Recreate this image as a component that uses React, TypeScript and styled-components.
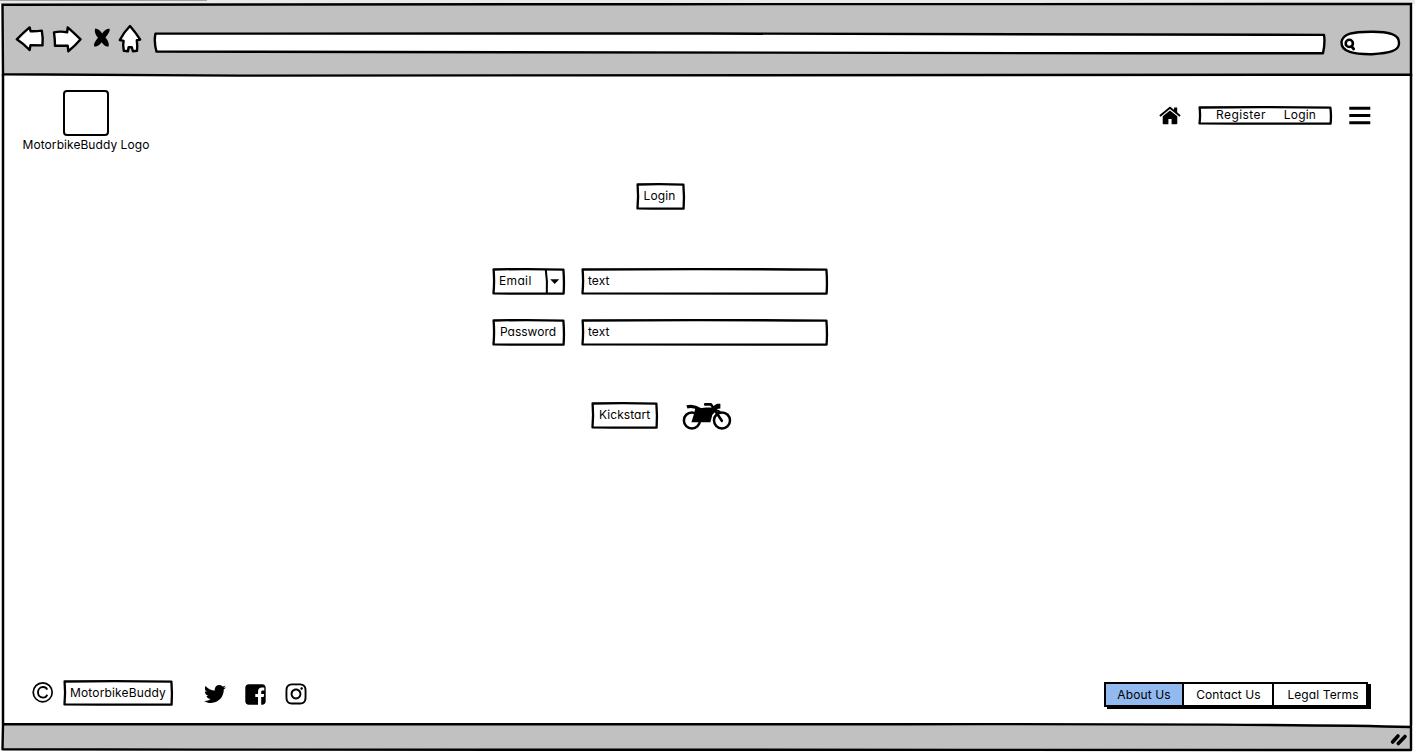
import React from "react";
import styled, { createGlobalStyle } from "styled-components";
import { FaTwitter, FaInstagram } from "react-icons/fa";

const GlobalStyle = createGlobalStyle`
  * { box-sizing: border-box; }
  body {
    margin: 0;
    background: #ffffff;
    color: #000;
    font-family: Inter, "Liberation Sans", sans-serif;
    font-size: 12px;
    font-feature-settings: "cv11";
  }
`;

const Window = styled.div`
  width: 1415px;
  height: 754px;
  overflow: hidden;
  display: flex;
  flex-direction: column;
`;

const TopEdge = styled.div`
  height: 4px;
  flex: none;
  background: #e9e9ec;
  &::before {
    content: "";
    display: block;
    width: 207px;
    height: 1px;
    background: #a0a0a0;
  }
`;

const Toolbar = styled.header`
  position: relative;
  flex: none;
  height: 71px;
  display: flex;
  padding: 20px 0 0 15px;
`;

const StatusBar = styled.footer`
  position: relative;
  flex: none;
  height: 30px;
  display: flex;
  justify-content: flex-end;
  padding: 9px 8px 0 0;
`;

const Page = styled.main`
  flex: 1;
  display: flex;
  flex-direction: column;
`;

const Outline = styled.svg`
  position: absolute;
  inset: 0;
  overflow: visible;
`;

const Drawing = styled.svg`
  position: relative;
  display: block;
  flex: none;
  overflow: visible;
`;

const SiteHeader = styled.div`
  display: flex;
  justify-content: space-between;
  height: 78px;
  padding: 15px 44px 0 22px;
`;

const Brand = styled.div`
  display: flex;
  flex-direction: column;
  align-items: center;
  width: 128px;
  gap: 1px;
`;

const LogoBox = styled.div`
  width: 46px;
  height: 46px;
  border: 2px solid #000;
  border-radius: 4px;
`;

const Nav = styled.nav`
  display: flex;
  align-items: flex-start;
  padding-top: 16px;
  gap: 17px;
`;

const Frame = styled.div<{ $w: number; $h: number; $pad?: number; $gap?: number }>`
  position: relative;
  flex: none;
  display: flex;
  align-items: center;
  width: ${(p) => p.$w}px;
  height: ${(p) => p.$h}px;
  padding-left: ${(p) => p.$pad ?? 7}px;
  gap: ${(p) => p.$gap ?? 0}px;
`;

const Text = styled.span<{ $track?: number }>`
  position: relative;
  line-height: 16px;
  white-space: nowrap;
  letter-spacing: ${(p) => p.$track ?? 0.05}px;
`;

const Raised = styled(Text)`
  padding-bottom: 2px;
`;

const Form = styled.div`
  display: flex;
  flex-direction: column;
  align-items: center;
  width: 334px;
  margin: 30px 0 0 493px;
`;

const LoginTitle = styled.div`
  margin-bottom: 58px;
`;

const Field = styled.div`
  display: flex;
  gap: 16px;
  margin-bottom: 24px;
`;

const Submit = styled.div`
  display: flex;
  align-items: flex-start;
  gap: 25px;
  margin: 32px 0 0 3px;
`;

const SiteFooter = styled.div`
  display: flex;
  justify-content: space-between;
  margin-top: auto;
  padding: 0 44px 17px 32px;
`;

const Social = styled.div`
  display: flex;
  align-items: flex-start;
`;

const IconSlot = styled.span<{ $size: number; $left?: number; $top?: number }>`
  display: flex;
  font-size: ${(p) => p.$size}px;
  margin: ${(p) => p.$top ?? 0}px 0 0 ${(p) => p.$left ?? 0}px;
`;

const OwnerTag = styled.div`
  margin: -1px 0 0 9px;
`;

const Tabs = styled.div`
  display: flex;
  align-self: flex-start;
  height: 25px;
  margin: 1px 3px 0 0;
  border: 2px solid #000;
  box-shadow: 3px 2px 0 #000;
`;

const Tab = styled.div<{ $w: number; $active?: boolean; $shift?: number }>`
  width: ${(p) => p.$w}px;
  display: flex;
  align-items: center;
  justify-content: center;
  padding-left: ${(p) => p.$shift ?? 0}px;
  white-space: nowrap;
  letter-spacing: 0.1px;
  background: ${(p) => (p.$active ? "#92b9f0" : "#fff")};
  & + & { border-left: 2px solid #000; }
`;

/* Hand-drawn rectangle: slightly bowed sides with a rounded pen. */
function Sketch({ w, h }: { w: number; h: number }) {
  const r = w - 1.4;
  const b = h - 1.4;
  return (
    <Outline width={w} height={h} aria-hidden="true">
      <path
        d={`M1.6 1.5 Q${w * 0.5} ${0.7} ${r - 0.2} 1.6 Q${r + 0.8} ${h * 0.5} ${r} ${b} Q${w * 0.5} ${b + 0.3} 1.5 ${b - 0.2} Q2.6 ${h * 0.5} 1.6 1.5 Z`}
        fill="#fff"
        stroke="#000"
        strokeWidth="2.3"
        strokeLinejoin="round"
      />
    </Outline>
  );
}

function Boxed({ w, h, pad, track, children }: { w: number; h: number; pad?: number; track?: number; children: string }) {
  return (
    <Frame $w={w} $h={h} $pad={pad}>
      <Sketch w={w} h={h} />
      <Raised $track={track}>{children}</Raised>
    </Frame>
  );
}

function Motorbike() {
  return (
    <Drawing width="49" height="28" viewBox="0.6 0 49 28">
      <g fill="none" stroke="#000">
        <circle cx="9.5" cy="18.4" r="8" strokeWidth="2.5" />
        <circle cx="39.6" cy="18.4" r="8" strokeWidth="2.5" />
        <path d="M4.5 4.9 C9 3.5 13 4.2 18 7.6" strokeWidth="3.2" />
        <path d="M22.8 2.4 H28.6 L39.4 18.8" strokeWidth="2.6" strokeLinecap="round" strokeLinejoin="round" />
        <path d="M29 12 L33.5 8 L38 9.9" strokeWidth="2" />
      </g>
      <path d="M13 6 L17.5 6.4 C21 5.4 26 5.3 31 5.6 L32.6 9.2 L30 12.5 L28 20.2 H9 L11.6 12 Z" />
      <path d="M30.5 4.6 L34.5 1.8 H38 V6.6 L33 7.2 Z" />
    </Drawing>
  );
}

function House() {
  return (
    <Drawing width="22" height="18" viewBox="0 0 22 18">
      <path d="M11 4.4 L18.3 10.3 V17.3 Q18.3 18.2 17.4 18.2 H12.6 V13 H9.4 V18.2 H4.6 Q3.7 18.2 3.7 17.3 V10.3 Z" />
      <path d="M.9 10.1 L11 1.7 L21.1 10.1" fill="none" stroke="#000" strokeWidth="1.9" />
      <path d="M15 1.4 H18.2 V7.9 L15 5.3 Z" />
    </Drawing>
  );
}

function Copyright() {
  return (
    <Drawing width="22" height="22" viewBox="0 0 22 22" fill="none" stroke="#000">
      <circle cx="10.7" cy="11.3" r="9.5" strokeWidth="1.7" />
      <path d="M15.2 8.7 C14.5 7 13 6 11 6 C8 6 6 8.3 6 11.3 C6 14.3 8 16.6 11 16.6 C13 16.6 14.6 15.5 15.2 13.7" strokeWidth="1.9" />
    </Drawing>
  );
}

function Facebook() {
  return (
    <Drawing width="21" height="21" viewBox="0 0 21 21">
      <path d="M4 .3 H17 Q20.7 .3 20.7 4 V17 Q20.7 20.7 17 20.7 H16.2 V13 H18.7 L19.1 9.9 H16.2 V8 C16.2 7 16.6 6.4 17.8 6.4 H19.3 V3.7 C18.9 3.6 18 3.5 17 3.5 C14.6 3.5 13 5 13 7.6 V9.9 H10.3 V13 H13 V20.7 H4 Q.3 20.7 .3 17 V4 Q.3 .3 4 .3 Z" />
    </Drawing>
  );
}

export default function App() {
  return (
    <>
      <GlobalStyle />
      <Window>
        <TopEdge />
        <Toolbar>
          <Outline width="1415" height="71">
            <path
              d="M2.5 .7 C500 -.2 900 .5 1411 0 V70.7 C1100 70.2 700 72.2 240 71.6 L3 70.3 Z"
              fill="#c1c1c1"
              stroke="#000"
              strokeWidth="2.4"
            />
            <path d="M3 70 V720 M1411 70 V722" stroke="#000" strokeWidth="2.5" />
          </Outline>
          <Drawing width="1390" height="34" viewBox="15 24 1390 34">
            <g fill="#fff" stroke="#000" strokeWidth="2.4" strokeLinejoin="round">
              <path d="M16.8 39.3 Q23 33 29.6 27.4 L30.6 31.2 Q36 31.4 41.8 30.6 Q43.2 38 42.5 45.4 L30.5 45.3 L29.6 50 Q24 44 16.8 39.3 Z" />
              <path d="M54 32.3 Q60 31 67.2 32.2 L67.7 27.4 Q74 33 80.6 39.3 Q75 46 68.3 51.2 L67.7 45.6 L55 45.7 Q54.8 38 54 32.3 Z" />
              <path d="M130 26 Q136 33 140.2 39.6 L136.8 40.2 Q137.6 46 137 50.8 L132.9 51.2 L131.8 47.2 H128.6 L128 51.2 L123.8 50.7 Q122.6 45 123.6 40.8 L119.8 40 Q124 32 130 26 Z" />
              <path d="M155.5 33.6 C500 32.8 1000 34 1324 34.9 Q1325.3 43 1323 53.2 C900 53.8 450 52 156.5 51.6 Q153.7 42 155.5 33.6 Z" />
              <path d="M1341.5 42 C1343 33 1353 32 1371 31.7 C1388 31.5 1399 34 1399 42.5 C1400 51 1389 53.2 1372 54.2 C1354 54.4 1341 52 1341.5 42 Z" />
              <circle cx="1349.3" cy="43.4" r="3.6" strokeWidth="2.6" />
              <path d="M1351.5 46.4 L1353.7 49" strokeLinecap="round" strokeWidth="2.8" />
            </g>
            <path d="M95.2 28.4 C98 28.4 100.6 31 102.2 33.4 C104 30.4 106.8 28 109.6 28.8 C110.2 31.6 107.6 35 105.4 37.6 C107.2 39.6 109.6 43.2 108.6 46.4 C105.8 47.3 103.4 44.4 101.6 42.2 C99.6 45 96.6 47.3 94 46.3 C93.6 43.4 95.8 40.4 98 37.8 C95.8 35 94 31.4 95.2 28.4 Z" />
          </Drawing>
        </Toolbar>

        <Page>
          <SiteHeader>
            <Brand>
              <LogoBox />
              <Text $track={0.06}>MotorbikeBuddy Logo</Text>
            </Brand>
            <Nav>
              <House />
              <Frame $w={134} $h={19} $pad={18} $gap={18}>
                <Sketch w={134} h={19} />
                <Raised $track={0.42}>Register</Raised>
                <Raised $track={0.2}>Login</Raised>
              </Frame>
              <Drawing width="22" height="18">
                <path d="M.3 .7h21v3h-21zM.3 8h21v3h-21zM.3 15.3h21v3h-21z" />
              </Drawing>
            </Nav>
          </SiteHeader>

          <Form>
            <LoginTitle>
              <Boxed w={49} h={27} pad={8} track={0.1}>Login</Boxed>
            </LoginTitle>
            <Field>
              <Frame $w={73} $h={27}>
                <Sketch w={73} h={27} />
                <Outline width="73" height="27">
                  <path d="M53.7 1 Q55.6 13 54.8 26" fill="none" stroke="#000" strokeWidth="2" />
                  <path d="M58.2 11.3 H67.2 L62.7 16 Z" />
                </Outline>
                <Raised $track={0.35}>Email</Raised>
              </Frame>
              <Boxed w={247} h={27}>text</Boxed>
            </Field>
            <Field>
              <Boxed w={73} h={27} pad={8} track={0}>Password</Boxed>
              <Boxed w={247} h={27}>text</Boxed>
            </Field>
            <Submit>
              <Boxed w={67} h={27} pad={8}>Kickstart</Boxed>
              <Motorbike />
            </Submit>
          </Form>

          <SiteFooter>
            <Social>
              <Copyright />
              <OwnerTag>
                <Frame $w={110} $h={26}>
                  <Sketch w={110} h={26} />
                  <Text $track={0.15}>MotorbikeBuddy</Text>
                </Frame>
              </OwnerTag>
              <IconSlot $size={22} $left={31} $top={2}><FaTwitter /></IconSlot>
              <IconSlot $size={21} $left={19} $top={3}><Facebook /></IconSlot>
              <IconSlot $size={24} $left={18} $top={1}><FaInstagram /></IconSlot>
            </Social>
            <Tabs>
              <Tab $w={76} $active>About Us</Tab>
              <Tab $w={90} $shift={1}>Contact Us</Tab>
              <Tab $w={94} $shift={6}>Legal Terms</Tab>
            </Tabs>
          </SiteFooter>
        </Page>

        <StatusBar>
          <Outline width="1415" height="30">
            <path
              d="M3 .3 C300 .8 500 -1 900 .2 C1100 0 1300 0 1411 3 L1411 26 C1000 26.5 400 24.5 200 25.6 L2.5 25.3 Z"
              fill="#c1c1c1"
              stroke="#000"
              strokeWidth="2.4"
              strokeLinejoin="round"
            />
          </Outline>
          <Drawing width="16" height="12">
            <path d="M1.6 9 L7 3 M7.3 10.5 L14 3.5" stroke="#000" strokeWidth="3.6" strokeLinecap="round" />
          </Drawing>
        </StatusBar>
      </Window>
    </>
  );
}
